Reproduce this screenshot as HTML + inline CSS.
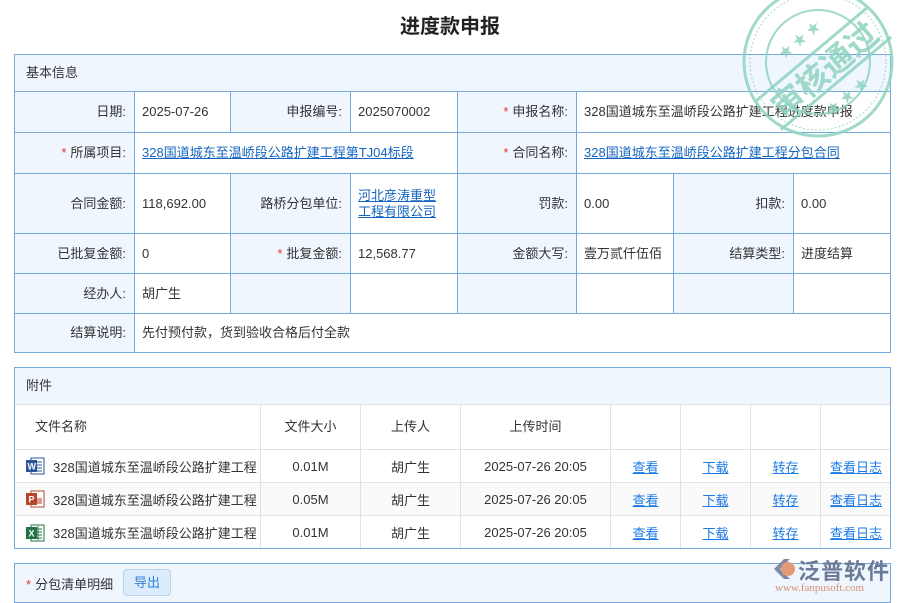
<!DOCTYPE html>
<html><head><meta charset="utf-8"><style>
*{box-sizing:border-box;margin:0;padding:0}
body{width:900px;height:600px;overflow:hidden;background:#fff;font-family:"Liberation Sans","Noto Sans CJK SC",sans-serif;font-size:13px;color:#333;position:relative}
.c{position:absolute;border:1px solid #76a9dc;display:flex;align-items:center;padding:0 6px;line-height:16px}
.l{background:#eff6fe;justify-content:flex-end;padding-right:8px}
.v{background:#fff;padding-left:7px}
.r{color:#e33;margin-right:4px}
a{color:#1565c0;text-decoration:underline}
.g a{color:#1a7ae6}
.g{position:absolute;border-right:1px solid #e2e2e2;border-bottom:1px solid #e2e2e2;display:flex;align-items:center;justify-content:center}
.ic{width:20px;height:20px;margin-right:8px;position:relative;flex:none}
</style></head><body>
<div style="position:absolute;top:10px;left:0;width:900px;text-align:center;font-size:20px;font-weight:bold;color:#222">进度款申报</div>

<div class="c" style="left:14px;top:54px;width:877px;height:38px;background:#eff6fe;justify-content:flex-start;padding-left:11px">基本信息</div>
<div class="c l" style="left:14px;top:91px;width:121px;height:42px">日期:</div>
<div class="c v" style="left:134px;top:91px;width:97px;height:42px">2025-07-26</div>
<div class="c l" style="left:230px;top:91px;width:121px;height:42px">申报编号:</div>
<div class="c v" style="left:350px;top:91px;width:108px;height:42px">2025070002</div>
<div class="c l" style="left:457px;top:91px;width:120px;height:42px"><span class="r">*</span>申报名称:</div>
<div class="c v" style="left:576px;top:91px;width:315px;height:42px">328国道城东至温峤段公路扩建工程进度款申报</div>
<div class="c l" style="left:14px;top:132px;width:121px;height:42px"><span class="r">*</span>所属项目:</div>
<div class="c v" style="left:134px;top:132px;width:324px;height:42px"><a>328国道城东至温峤段公路扩建工程第TJ04标段</a></div>
<div class="c l" style="left:457px;top:132px;width:120px;height:42px"><span class="r">*</span>合同名称:</div>
<div class="c v" style="left:576px;top:132px;width:315px;height:42px"><a>328国道城东至温峤段公路扩建工程分包合同</a></div>
<div class="c l" style="left:14px;top:173px;width:121px;height:61px">合同金额:</div>
<div class="c v" style="left:134px;top:173px;width:97px;height:61px">118,692.00</div>
<div class="c l" style="left:230px;top:173px;width:121px;height:61px">路桥分包单位:</div>
<div class="c v" style="left:350px;top:173px;width:108px;height:61px"><a>河北彦涛重型<br>工程有限公司</a></div>
<div class="c l" style="left:457px;top:173px;width:120px;height:61px">罚款:</div>
<div class="c v" style="left:576px;top:173px;width:98px;height:61px">0.00</div>
<div class="c l" style="left:673px;top:173px;width:121px;height:61px">扣款:</div>
<div class="c v" style="left:793px;top:173px;width:98px;height:61px">0.00</div>
<div class="c l" style="left:14px;top:233px;width:121px;height:41px">已批复金额:</div>
<div class="c v" style="left:134px;top:233px;width:97px;height:41px">0</div>
<div class="c l" style="left:230px;top:233px;width:121px;height:41px"><span class="r">*</span>批复金额:</div>
<div class="c v" style="left:350px;top:233px;width:108px;height:41px">12,568.77</div>
<div class="c l" style="left:457px;top:233px;width:120px;height:41px">金额大写:</div>
<div class="c v" style="left:576px;top:233px;width:98px;height:41px">壹万贰仟伍佰</div>
<div class="c l" style="left:673px;top:233px;width:121px;height:41px">结算类型:</div>
<div class="c v" style="left:793px;top:233px;width:98px;height:41px">进度结算</div>
<div class="c l" style="left:14px;top:273px;width:121px;height:41px">经办人:</div>
<div class="c v" style="left:134px;top:273px;width:97px;height:41px">胡广生</div>
<div class="c l" style="left:230px;top:273px;width:121px;height:41px"></div>
<div class="c v" style="left:350px;top:273px;width:108px;height:41px"></div>
<div class="c l" style="left:457px;top:273px;width:120px;height:41px"></div>
<div class="c v" style="left:576px;top:273px;width:98px;height:41px"></div>
<div class="c l" style="left:673px;top:273px;width:121px;height:41px"></div>
<div class="c v" style="left:793px;top:273px;width:98px;height:41px"></div>
<div class="c l" style="left:14px;top:313px;width:121px;height:40px">结算说明:</div>
<div class="c v" style="left:134px;top:313px;width:757px;height:40px">先付预付款，货到验收合格后付全款</div>

<div style="position:absolute;left:14px;top:367px;width:877px;height:182px;border:1px solid #76a9dc;background:#fff;overflow:hidden">
<div style="position:absolute;left:0;top:0;width:875px;height:37px;background:#eff6fe;border-bottom:1px solid #e2e2e2;padding-left:11px;line-height:36px">附件</div>
<div class="g" style="left:0;top:37px;width:246px;height:45px;justify-content:flex-start;padding-left:20px;padding-bottom:3px">文件名称</div>
<div class="g" style="left:246px;top:37px;width:100px;height:45px;padding-bottom:3px">文件大小</div>
<div class="g" style="left:346px;top:37px;width:100px;height:45px;padding-bottom:3px">上传人</div>
<div class="g" style="left:446px;top:37px;width:150px;height:45px;padding-bottom:3px">上传时间</div>
<div class="g" style="left:596px;top:37px;width:70px;height:45px"></div>
<div class="g" style="left:666px;top:37px;width:70px;height:45px"></div>
<div class="g" style="left:736px;top:37px;width:70px;height:45px"></div>
<div class="g" style="left:806px;top:37px;width:70px;height:45px;border-right:none"></div>

<div class="g" style="left:0;top:82px;width:246px;height:33px;justify-content:flex-start;padding-left:10px"><span class="ic"><svg width="20" height="20"><rect x="6" y="2" width="13" height="16" fill="#fff" stroke="#2b579a"/><path d="M9 6h8M9 9h8M9 12h8M9 15h8" stroke="#2b579a"/><rect x="1" y="4" width="11" height="12" fill="#2b579a"/><text x="2.5" y="13.5" font-size="9" fill="#fff" font-family="Liberation Sans" font-weight="bold">W</text></svg></span>328国道城东至温峤段公路扩建工程</div>
<div class="g" style="left:246px;top:82px;width:100px;height:33px">0.01M</div>
<div class="g" style="left:346px;top:82px;width:100px;height:33px">胡广生</div>
<div class="g" style="left:446px;top:82px;width:150px;height:33px">2025-07-26 20:05</div>
<div class="g" style="left:596px;top:82px;width:70px;height:33px"><a>查看</a></div>
<div class="g" style="left:666px;top:82px;width:70px;height:33px"><a>下载</a></div>
<div class="g" style="left:736px;top:82px;width:70px;height:33px"><a>转存</a></div>
<div class="g" style="left:806px;top:82px;width:70px;height:33px;border-right:none"><a>查看日志</a></div>

<div class="g" style="left:0;top:115px;width:246px;height:33px;justify-content:flex-start;padding-left:10px;background:#fafafa"><span class="ic"><svg width="20" height="20"><rect x="6" y="2" width="13" height="16" fill="#fff" stroke="#b7472a"/><rect x="10" y="9" width="7" height="6" fill="#d99"/><rect x="1" y="4" width="11" height="12" fill="#b7472a"/><text x="3.5" y="13.5" font-size="9" fill="#fff" font-family="Liberation Sans" font-weight="bold">P</text></svg></span>328国道城东至温峤段公路扩建工程</div>
<div class="g" style="left:246px;top:115px;width:100px;height:33px;background:#fafafa">0.05M</div>
<div class="g" style="left:346px;top:115px;width:100px;height:33px;background:#fafafa">胡广生</div>
<div class="g" style="left:446px;top:115px;width:150px;height:33px;background:#fafafa">2025-07-26 20:05</div>
<div class="g" style="left:596px;top:115px;width:70px;height:33px;background:#fafafa"><a>查看</a></div>
<div class="g" style="left:666px;top:115px;width:70px;height:33px;background:#fafafa"><a>下载</a></div>
<div class="g" style="left:736px;top:115px;width:70px;height:33px;background:#fafafa"><a>转存</a></div>
<div class="g" style="left:806px;top:115px;width:70px;height:33px;border-right:none;background:#fafafa"><a>查看日志</a></div>

<div class="g" style="left:0;top:148px;width:246px;height:33px;justify-content:flex-start;padding-left:10px;border-bottom:none"><span class="ic"><svg width="20" height="20"><rect x="6" y="2" width="13" height="16" fill="#fff" stroke="#217346"/><path d="M9 6h8M9 9h8M9 12h8M9 15h8M13 3v14" stroke="#217346"/><rect x="1" y="4" width="11" height="12" fill="#217346"/><text x="3.5" y="13.5" font-size="9" fill="#fff" font-family="Liberation Sans" font-weight="bold">X</text></svg></span>328国道城东至温峤段公路扩建工程</div>
<div class="g" style="left:246px;top:148px;width:100px;height:33px;border-bottom:none">0.01M</div>
<div class="g" style="left:346px;top:148px;width:100px;height:33px;border-bottom:none">胡广生</div>
<div class="g" style="left:446px;top:148px;width:150px;height:33px;border-bottom:none">2025-07-26 20:05</div>
<div class="g" style="left:596px;top:148px;width:70px;height:33px;border-bottom:none"><a>查看</a></div>
<div class="g" style="left:666px;top:148px;width:70px;height:33px;border-bottom:none"><a>下载</a></div>
<div class="g" style="left:736px;top:148px;width:70px;height:33px;border-bottom:none"><a>转存</a></div>
<div class="g" style="left:806px;top:148px;width:70px;height:33px;border:none"><a>查看日志</a></div>
</div>

<div style="position:absolute;left:14px;top:563px;width:877px;height:40px;border:1px solid #76a9dc;background:#eff6fe">
<span style="position:absolute;left:11px;top:10px"><span class="r">*</span>分包清单明细</span>
<span style="position:absolute;left:108px;top:5px;width:48px;height:27px;border:1px solid #b7d4f0;background:#ddecfb;border-radius:4px;color:#2f7fd8;text-align:center;line-height:25px">导出</span>
</div>

<div style="position:absolute;left:770px;top:554px;width:125px;height:44px">
<svg width="28" height="26" style="position:absolute;left:0;top:2px"><path d="M4 13 L14 3 L20 3 L10 13 L20 23 L14 23Z" fill="#7d8aa8"/><circle cx="18" cy="13" r="7" fill="#e39a78"/></svg>
<span style="position:absolute;left:28px;top:0;font-size:22px;color:#6c7a98;letter-spacing:1px;font-weight:bold">泛普软件</span>
<span style="position:absolute;left:5px;top:28px;font-size:11px;color:#d79070;font-family:'Liberation Serif',serif">www.fanpusoft.com</span>
</div>

<svg style="position:absolute;left:740px;top:-14px" width="160" height="160" viewBox="0 0 160 160">
<g fill="none" stroke="#8fd3c0" opacity="0.85">
<circle cx="78" cy="76" r="74" stroke-width="3"/>
<circle cx="78" cy="76" r="68" stroke-width="1" stroke-dasharray="2 2"/>
<circle cx="78" cy="76" r="52" stroke-width="2"/>
</g>
<g transform="rotate(-40 78 76)" opacity="0.85">
<path d="M6 66 H150 M6 104 H150" stroke="#8fd3c0" stroke-width="3"/>
<text x="78" y="98" text-anchor="middle" font-size="32" font-weight="bold" fill="#8fd3c0" font-family="'Noto Sans CJK SC',sans-serif">审核通过</text>
<text x="78" y="52" text-anchor="middle" font-size="14" fill="#8fd3c0">★ ★ ★</text>
<text x="78" y="126" text-anchor="middle" font-size="14" fill="#8fd3c0">★ ★ ★</text>
</g>
</svg>
</body></html>
